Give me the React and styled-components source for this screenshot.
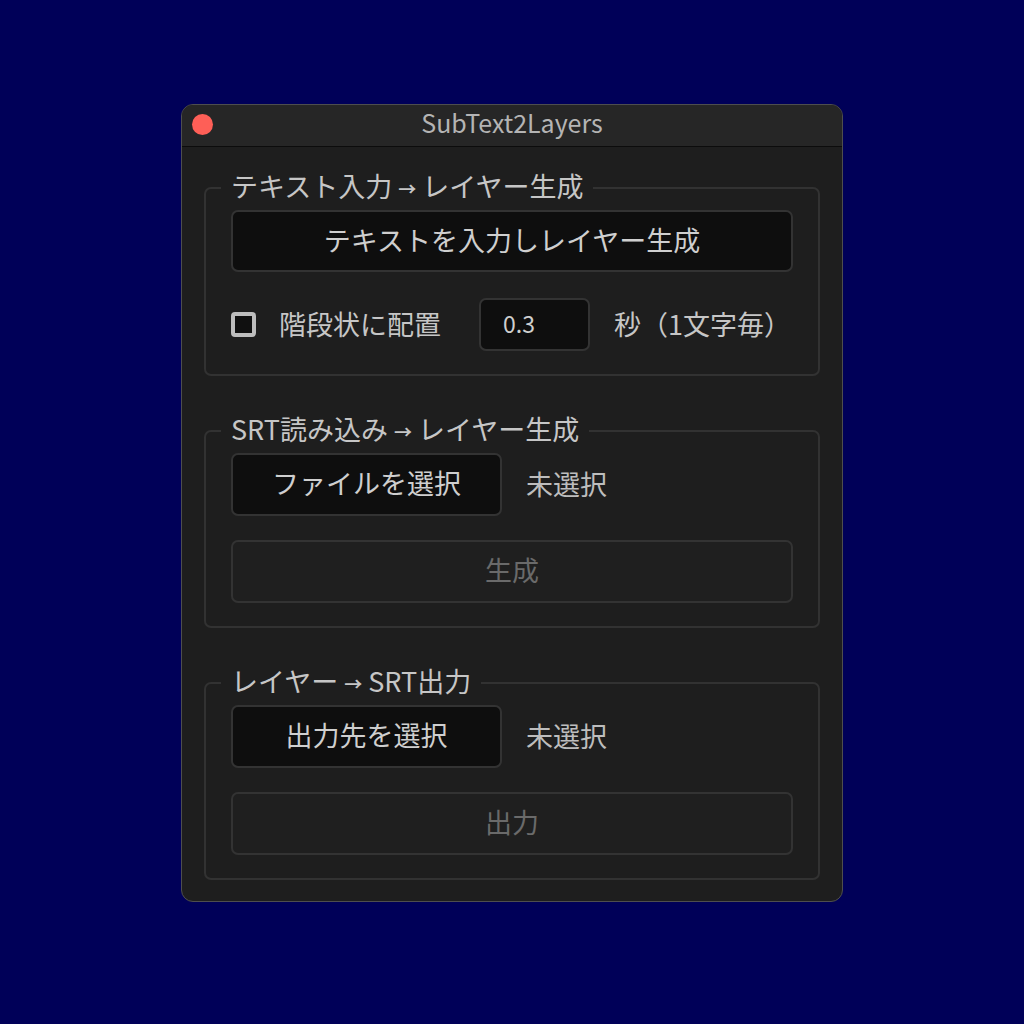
import React from 'react';
import styled, { createGlobalStyle } from 'styled-components';

const font = `"Noto Sans CJK JP", "Noto Sans", sans-serif`;

const GlobalStyle = createGlobalStyle`
  html, body {
    margin: 0;
    padding: 0;
    background: #000058;
  }
  body {
    font-family: ${font};
  }
`;

const Page = styled.div`
  width: 1024px;
  height: 1024px;
  display: flex;
  justify-content: center;
  padding-top: 104px;
  box-sizing: border-box;
`;

const Window = styled.div`
  width: 662px;
  height: 798px;
  box-sizing: border-box;
  background: #1e1e1e;
  border: 1px solid #4e4e4e;
  border-radius: 12px;
  overflow: hidden;
  display: flex;
  flex-direction: column;
`;

const TitleBar = styled.div`
  height: 41px;
  flex-shrink: 0;
  background: #262626;
  border-bottom: 1px solid #0c0c0c;
  display: flex;
  align-items: center;
  position: relative;
`;

const CloseDot = styled.span`
  position: absolute;
  left: 10px;
  top: 9px;
  width: 21px;
  height: 21px;
  border-radius: 50%;
  background: #fe5f57;
`;

const Title = styled.div`
  flex: 1;
  text-align: center;
  font-size: 25px;
  line-height: 1;
  margin-top: -7px;
  color: #b4b4b4;
`;

const Body = styled.div`
  padding: 24px 22px 0 22px;
  display: flex;
  flex-direction: column;
  gap: 38px;
`;

const Group = styled.fieldset`
  margin: 0;
  padding: 6px 25px 23px 25px;
  border: 2px solid #323232;
  border-radius: 7px;
  display: flex;
  flex-direction: column;
  gap: ${props => props.gap || '24px'};
  min-width: 0;
`;

const Legend = styled.legend`
  font-size: 27px;
  line-height: 30px;
  color: #c6c6c6;
  padding: 0 10px;
  margin-left: -10px;
`;

const Arrow = styled.span`
  display: inline-block;
  font-size: 18px;
  font-weight: 700;
  margin: 0 6px;
  transform: translateY(-1px);
`;

const Button = styled.button`
  font-family: ${font};
  height: ${props => props.h || '63px'};
  width: ${props => props.w || '100%'};
  box-sizing: border-box;
  background: ${props => (props.disabled ? '#1f1f1f' : '#0e0e0e')};
  border: 2px solid #333;
  border-radius: 7px;
  font-size: 27px;
  color: ${props => (props.disabled ? '#6a6a6a' : '#cfcfcf')};
  cursor: ${props => (props.disabled ? 'default' : 'pointer')};
  padding: 0 0 4px 0;
  flex-shrink: 0;
`;

const Row = styled.div`
  display: flex;
  align-items: center;
  gap: ${props => props.gap || '24px'};
`;

const Checkbox = styled.span`
  width: 25px;
  height: 25px;
  box-sizing: border-box;
  border: 4px solid #bdbdbd;
  border-radius: 4px;
  background: #101010;
  flex-shrink: 0;
  margin-right: -1px;
`;

const Label = styled.span`
  font-size: 27px;
  color: ${props => (props.muted ? '#bdbdbd' : '#c6c6c6')};
  white-space: nowrap;
  margin-right: ${props => props.mr || '0'};
  padding-bottom: 2px;
`;

const NumberInput = styled.input`
  font-family: ${font};
  width: 111px;
  height: 53px;
  box-sizing: border-box;
  background: #0e0e0e;
  border: 2px solid #333;
  border-radius: 7px;
  padding: 0 0 3px 22px;
  font-size: 23px;
  color: #cfcfcf;
  outline: none;
`;

export default function App() {
  return (
    <>
      <GlobalStyle />
      <Page>
        <Window>
          <TitleBar>
            <CloseDot />
            <Title>SubText2Layers</Title>
          </TitleBar>
          <Body>
            <Group gap="26px">
              <Legend>
                テキスト入力<Arrow>→</Arrow>レイヤー生成
              </Legend>
              <Button h="62px">テキストを入力しレイヤー生成</Button>
              <Row>
                <Checkbox />
                <Label mr="14px">階段状に配置</Label>
                <NumberInput defaultValue="0.3" />
                <Label>秒（1文字毎）</Label>
              </Row>
            </Group>

            <Group>
              <Legend>
                SRT読み込み<Arrow>→</Arrow>レイヤー生成
              </Legend>
              <Row>
                <Button w="271px">ファイルを選択</Button>
                <Label muted>未選択</Label>
              </Row>
              <Button disabled>生成</Button>
            </Group>

            <Group>
              <Legend>
                レイヤー<Arrow>→</Arrow>SRT出力
              </Legend>
              <Row>
                <Button w="271px">出力先を選択</Button>
                <Label muted>未選択</Label>
              </Row>
              <Button disabled>出力</Button>
            </Group>
          </Body>
        </Window>
      </Page>
    </>
  );
}
